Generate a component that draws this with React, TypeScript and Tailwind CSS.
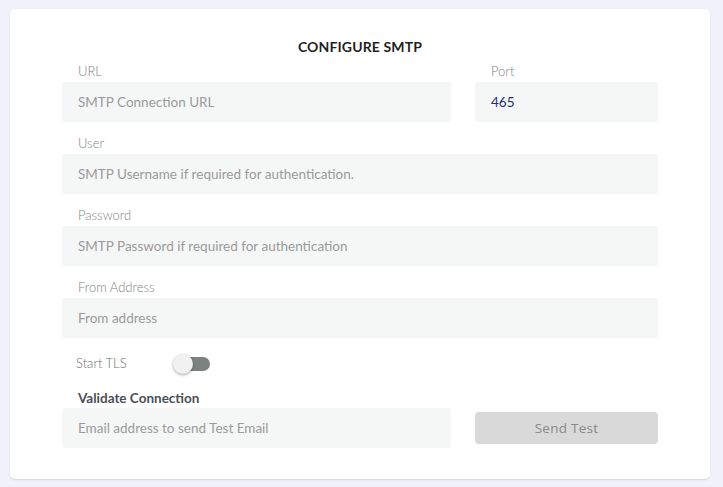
import { useState } from "react"

type FieldProps = {
  label: string
  placeholder: string
  value?: string
}

function Field({ label, placeholder, value }: FieldProps) {
  return (
    <div className="flex flex-col">
      <label className="h-[18px] pl-4 text-[13px] font-light leading-[18px] text-[#7f7f7f]">
        {label}
      </label>
      <input
        readOnly
        defaultValue={value}
        placeholder={placeholder}
        className="mt-[2px] h-10 w-full rounded-[3px] bg-[#f5f6f6] px-4 text-[13.5px] text-[#27306b] outline-none placeholder:text-[#9b9b9b]"
      />
    </div>
  )
}

function Toggle() {
  const [on, setOn] = useState(false)
  return (
    <button
      type="button"
      onClick={() => setOn(!on)}
      className="relative h-5 w-[37px]"
      aria-pressed={on}
    >
      <span className="absolute left-[3px] top-[3px] h-[14px] w-[34px] rounded-full bg-[#7d8180]" />
      <span className="absolute left-0 top-0 h-5 w-5 rounded-full bg-[#f1f1f1] shadow-[0_1px_3px_rgba(0,0,0,0.35)]" />
    </button>
  )
}

export default function App() {
  return (
    <div
      className="min-h-[487px] bg-[#f1f1fa] px-[10px] pt-[9px] pb-2"
      style={{ fontFamily: "Lato, 'Open Sans', sans-serif" }}
    >
      <div className="w-[700px] rounded-[5px] bg-white px-[52px] pt-[28px] pb-[31px] shadow-[0_1px_2px_rgba(0,0,0,0.12)]">
        <h2 className="text-center text-[14px] font-bold leading-5 tracking-[0.01em] text-[#1f1f1f]">
          CONFIGURE SMTP
        </h2>

        <div className="mt-[5px] grid grid-cols-[389px_183px] gap-x-6">
          <Field label="URL" placeholder="SMTP Connection URL" />
          <Field label="Port" placeholder="" value="465" />
        </div>

        <div className="mt-3 flex flex-col gap-3">
          <Field label="User" placeholder="SMTP Username if required for authentication." />
          <Field label="Password" placeholder="SMTP Password if required for authentication" />
          <Field label="From Address" placeholder="From address" />
        </div>

        <div className="mt-[14px] flex h-6 items-center pl-[14px]">
          <span className="w-[97px] text-[13px] font-light text-[#6f6f6f]">Start TLS</span>
          <div className="mt-[5px]">
            <Toggle />
          </div>
        </div>

        <div className="mt-[13px] pl-4 text-[13.5px] font-bold leading-[18px] text-[#4a4f57]">
          Validate Connection
        </div>
        <div className="mt-px grid grid-cols-[389px_183px] items-center gap-x-6">
          <input
            readOnly
            placeholder="Email address to send Test Email"
            className="h-10 w-full rounded-[3px] bg-[#f5f6f6] px-4 text-[13.5px] outline-none placeholder:text-[#9b9b9b]"
          />
          <button
            type="button"
            disabled
            className="h-8 rounded-[4px] bg-[#d9d9d9] text-[13.5px] tracking-[0.02em] text-[#8a8a8a]"
            style={{ fontFamily: "'Open Sans', sans-serif" }}
          >
            Send Test
          </button>
        </div>
      </div>
    </div>
  )
}
